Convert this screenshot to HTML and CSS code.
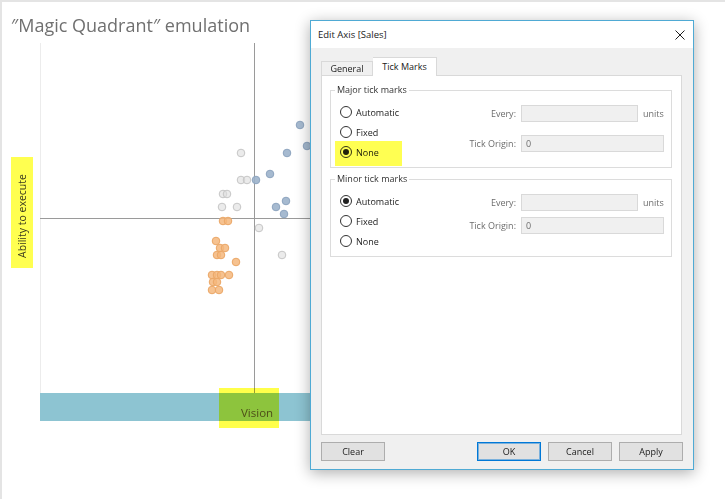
FILE: index.html
```html
<!DOCTYPE html>
<html>
<head>
<meta charset="utf-8">
<link rel="stylesheet" href="styles.css">
</head>
<body>
<div class="page">
  <div class="title">″Magic Quadrant″ emulation</div>
  <div class="chart">
    <div class="yaxis"><div class="ylabel">Ability to execute</div></div>
    <div class="plotcol">
      <svg class="plot" width="640" height="350">
        <line x1="0.5" y1="0" x2="0.5" y2="350" stroke="#ececec"/>
        <line x1="214.5" y1="0" x2="214.5" y2="350" stroke="#9a9a9a"/>
        <line x1="0" y1="175.5" x2="640" y2="175.5" stroke="#9a9a9a"/>
        <g class="pt-gray">
          <circle cx="201" cy="110" r="3.8"/>
          <circle cx="201" cy="137" r="3.8"/>
          <circle cx="207" cy="137" r="3.8"/>
          <circle cx="183" cy="151" r="3.8"/>
          <circle cx="187" cy="151" r="3.8"/>
          <circle cx="182" cy="164" r="3.8"/>
          <circle cx="197" cy="164" r="3.8"/>
          <circle cx="219" cy="185" r="3.8"/>
          <circle cx="242" cy="212" r="3.8"/>
        </g>
        <g class="pt-blue">
          <circle cx="260" cy="82" r="3.8"/>
          <circle cx="267" cy="103" r="3.8"/>
          <circle cx="247" cy="110" r="3.8"/>
          <circle cx="230" cy="131" r="3.8"/>
          <circle cx="216" cy="137" r="3.8"/>
          <circle cx="246" cy="158" r="3.8"/>
          <circle cx="236" cy="164" r="3.8"/>
          <circle cx="244" cy="171" r="3.8"/>
        </g>
        <g class="pt-orange">
          <circle cx="183" cy="178" r="3.8"/>
          <circle cx="188" cy="178" r="3.8"/>
          <circle cx="176" cy="198" r="3.8"/>
          <circle cx="180" cy="205" r="3.8"/>
          <circle cx="185" cy="205" r="3.8"/>
          <circle cx="177" cy="212" r="3.8"/>
          <circle cx="181" cy="212" r="3.8"/>
          <circle cx="196" cy="219" r="3.8"/>
          <circle cx="172" cy="232" r="3.8"/>
          <circle cx="177" cy="232" r="3.8"/>
          <circle cx="181" cy="232" r="3.8"/>
          <circle cx="189" cy="232" r="3.8"/>
          <circle cx="173" cy="239" r="3.8"/>
          <circle cx="177" cy="239" r="3.8"/>
          <circle cx="172" cy="247" r="3.8"/>
          <circle cx="179" cy="247" r="3.8"/>
        </g>
      </svg>
      <div class="xbar"><span class="xlabel">Vision</span><span class="hl"></span></div>
    </div>
  </div>

  <div class="dialog">
    <div class="titlebar">
      <span>Edit Axis [Sales]</span>
      <svg class="close" width="10" height="10" viewBox="0 0 10 10"><path d="M0.5 0.5L9.5 9.5M9.5 0.5L0.5 9.5" stroke="#1e1e1e" stroke-width="1"/></svg>
    </div>
    <div class="dbody">
      <div class="tabs">
        <div class="tab">General</div>
        <div class="tab active">Tick Marks</div>
      </div>
      <div class="panel">
        <fieldset class="group major">
          <legend>Major tick marks</legend>
          <div class="opts">
            <div class="optrow"><span class="radio"></span>Automatic</div>
            <div class="optrow"><span class="radio"></span>Fixed</div>
            <div class="optrow"><span class="mark"></span><span class="radio on"></span>None</div>
          </div>
          <div class="fields">
            <span class="flabel">Every:</span><span class="input"></span><span class="unit">units</span>
            <span class="flabel">Tick Origin:</span><span class="input wide">0</span>
          </div>
        </fieldset>
        <fieldset class="group minor">
          <legend>Minor tick marks</legend>
          <div class="opts">
            <div class="optrow"><span class="radio on"></span>Automatic</div>
            <div class="optrow"><span class="radio"></span>Fixed</div>
            <div class="optrow"><span class="radio"></span>None</div>
          </div>
          <div class="fields">
            <span class="flabel">Every:</span><span class="input"></span><span class="unit">units</span>
            <span class="flabel">Tick Origin:</span><span class="input wide">0</span>
          </div>
        </fieldset>
      </div>
      <div class="buttons">
        <div class="btn">Clear</div>
        <div class="btngroup">
          <div class="btn default">OK</div>
          <div class="btn">Cancel</div>
          <div class="btn">Apply</div>
        </div>
      </div>
    </div>
  </div>
</div>
</body>
</html>
```

FILE: styles.css
```css
* { box-sizing: border-box; }
html, body { margin: 0; padding: 0; }
body {
  width: 725px;
  height: 499px;
  overflow: hidden;
  background: #fff;
  font-family: "Open Sans", "DejaVu Sans", sans-serif;
}
.page {
  position: relative;
  width: 725px;
  height: 499px;
  border-top: 2px solid #e4e4e4;
  border-left: 2px solid #e4e4e4;
}
.title {
  height: 41px;
  padding: 11px 0 0 9px;
  font-size: 18px;
  line-height: 24px;
  color: #707070;
  white-space: nowrap;
}
.chart { display: flex; }
.yaxis {
  width: 38px;
  flex: none;
  padding: 114px 0 0 9px;
}
.ylabel {
  width: 22px;
  height: 111px;
  background: #ffff50;
  writing-mode: vertical-rl;
  transform: rotate(180deg);
  display: flex;
  align-items: center;
  justify-content: center;
  padding-bottom: 7px;
  font-size: 10.5px;
  color: #3a3a20;
  white-space: nowrap;
}
.plotcol { flex: none; width: 640px; }
.plot { display: block; }
.pt-gray circle { fill: #dedede; fill-opacity: 0.6; stroke: #c6c6c6; stroke-width: 1; }
.pt-blue circle { fill: #9cb2cb; fill-opacity: 0.9; stroke: #8da4bf; stroke-width: 1; }
.pt-orange circle { fill: #f5b77c; fill-opacity: 0.85; stroke: #eba766; stroke-width: 1; }

.xbar {
  position: relative;
  height: 28px;
  background: #8dc4d2;
  padding: 12px 0 0 201px;
  font-size: 11.5px;
  line-height: 16px;
  color: #4e4e4e;
}
.hl {
  position: absolute;
  left: 179px;
  top: -5px;
  width: 60px;
  height: 40px;
  background: #ffff4a;
  mix-blend-mode: multiply;
}

/* dialog */
.dialog {
  position: absolute;
  left: 308px;
  top: 18px;
  width: 384px;
  height: 450px;
  border: 1px solid #4faad4;
  background: #f0f0f0;
  box-shadow: 0 3px 14px rgba(0, 0, 0, 0.32);
  font-family: "Open Sans", sans-serif;
  font-size: 9px;
  color: #1a1a1a;
  display: flex;
  flex-direction: column;
}
.titlebar {
  height: 27px;
  flex: none;
  background: #fff;
  display: flex;
  align-items: center;
  justify-content: space-between;
  padding: 0 8px 0 7px;
  font-size: 9.5px;
  color: #1a1a1a;
}
.close { display: block; }
.dbody {
  flex: 1;
  padding: 9px 11px 8px 10px;
  display: flex;
  flex-direction: column;
}
.tabs {
  display: flex;
  align-items: flex-end;
  height: 18px;
}
.tab {
  width: 52px;
  height: 14px;
  border: 1px solid #d9d9d9;
  border-bottom: 0;
  text-align: center;
  line-height: 13px;
  color: #1a1a1a;
}
.tab.active {
  width: 64px;
  height: 19px;
  margin-bottom: -1px;
  background: #fff;
  line-height: 17px;
  border-left: 0;
  position: relative;
  z-index: 1;
}
.panel {
  height: 360px;
  background: #fff;
  border: 1px solid #d9d9d9;
  padding: 8px 9px 0 8px;
}
.group {
  margin: 0;
  min-width: 0;
  border: 1px solid #dcdcdc;
  padding: 6px 7px 5px 9px;
  display: flex;
  justify-content: space-between;
  align-items: flex-start;
}
.group.minor { margin-top: 5px; }
.group legend {
  padding: 0 2px;
  margin-left: -5px;
  line-height: 12px;
  color: #333;
}
.opts { display: flex; flex-direction: column; }
.optrow {
  position: relative;
  height: 20px;
  display: flex;
  align-items: center;
  gap: 4px;
}
.radio {
  width: 12px;
  height: 12px;
  flex: none;
  border: 1px solid #333;
  border-radius: 50%;
  background: #fff;
  display: flex;
  align-items: center;
  justify-content: center;
}
.radio.on::after {
  content: "";
  width: 6px;
  height: 6px;
  border-radius: 50%;
  background: #222;
}
.mark {
  position: absolute;
  left: -5px;
  top: -1px;
  width: 67px;
  height: 25px;
  background: #ffff52;
  mix-blend-mode: multiply;
}
.fields {
  margin-top: 3px;
  display: grid;
  grid-template-columns: auto 117px 21px;
  column-gap: 5px;
  row-gap: 13px;
  align-items: center;
  color: #6d6d6d;
}
.minor .fields { row-gap: 6px; }
.flabel { text-align: right; }
.input {
  height: 17px;
  background: #f0f0f0;
  border: 1px solid #d9d9d9;
  padding-left: 4px;
  line-height: 15px;
  color: #6d6d6d;
}
.input.wide { grid-column: 2 / span 2; }
.unit { white-space: nowrap; }

.buttons {
  margin-top: 7px;
  display: flex;
  justify-content: space-between;
}
.btngroup { display: flex; gap: 7px; margin-right: -1px; }
.btn {
  width: 64px;
  height: 19px;
  background: #e1e1e1;
  border: 1px solid #adadad;
  text-align: center;
  line-height: 17px;
  color: #1a1a1a;
}
.btn.default {
  border-color: #0078d7;
  box-shadow: inset 0 0 0 1px rgba(0, 120, 215, 0.45);
}
```
